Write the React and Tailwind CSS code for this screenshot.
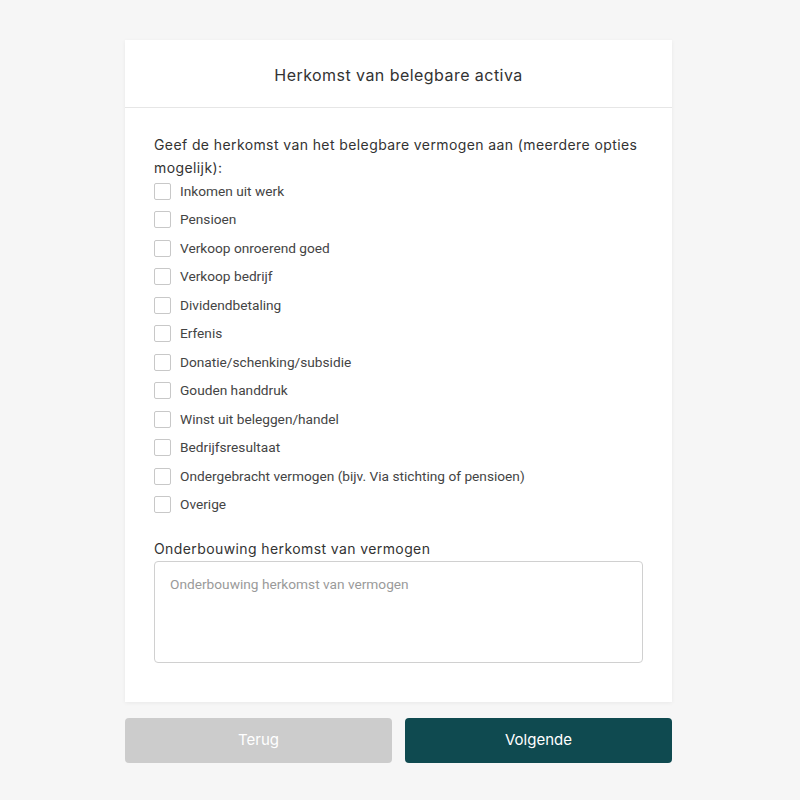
import React from "react";

const options = [
  "Inkomen uit werk",
  "Pensioen",
  "Verkoop onroerend goed",
  "Verkoop bedrijf",
  "Dividendbetaling",
  "Erfenis",
  "Donatie/schenking/subsidie",
  "Gouden handdruk",
  "Winst uit beleggen/handel",
  "Bedrijfsresultaat",
  "Ondergebracht vermogen (bijv. Via stichting of pensioen)",
  "Overige",
];

const mont = { fontFamily: "Inter, 'Open Sans', sans-serif" };

export default function App() {
  return (
    <div className="min-h-[800px] w-full bg-[#f6f6f6] pt-10">
      <div className="ml-[125px] w-[547px]">
        <div className="bg-white shadow-[0_1px_4px_rgba(0,0,0,0.06)]">
          <div
            className="flex h-[68px] items-center justify-center border-b border-[#e6e6e6] pt-[3px] text-[16px] tracking-[0.45px] text-[#333]"
            style={mont}
          >
            Herkomst van belegbare activa
          </div>
          <div className="px-[29px] pb-[39px] pt-[25px]">
            <p className="text-[14px] leading-[23px] tracking-[0.4px] text-[#333]" style={mont}>
              Geef de herkomst van het belegbare vermogen aan (meerdere opties mogelijk):
            </p>
            <div className="-mt-[2px] flex flex-col font-['Roboto',sans-serif] text-[13.7px] text-[#444]">
              {options.map((o) => (
                <label key={o} className="flex h-[28.5px] items-center gap-[9px]">
                  <span className="h-[17px] w-[17px] shrink-0 rounded-[2px] border-[1.5px] border-[#c8c8c8] bg-white" />
                  <span>{o}</span>
                </label>
              ))}
            </div>
            <div className="mt-[20px] text-[14px] leading-[20px] tracking-[0.4px] text-[#333]" style={mont}>
              Onderbouwing herkomst van vermogen
            </div>
            <textarea
              className="mt-[2px] block h-[102px] w-[489px] resize-none rounded-[4px] border border-[#d0d0d0] px-[15px] py-[12px] font-['Roboto',sans-serif] text-[13.7px] text-[#444] placeholder:text-[#9a9a9a] outline-none"
              placeholder="Onderbouwing herkomst van vermogen"
            />
          </div>
        </div>
        <div className="mt-4 flex gap-[13px]">
          <button
            className="h-[45px] flex-1 rounded-[4px] bg-[#cccccc] text-[15px] text-white"
            style={mont}
          >
            Terug
          </button>
          <button
            className="h-[45px] flex-1 rounded-[4px] bg-[#0f4a50] text-[15px] text-white"
            style={mont}
          >
            Volgende
          </button>
        </div>
      </div>
    </div>
  );
}
